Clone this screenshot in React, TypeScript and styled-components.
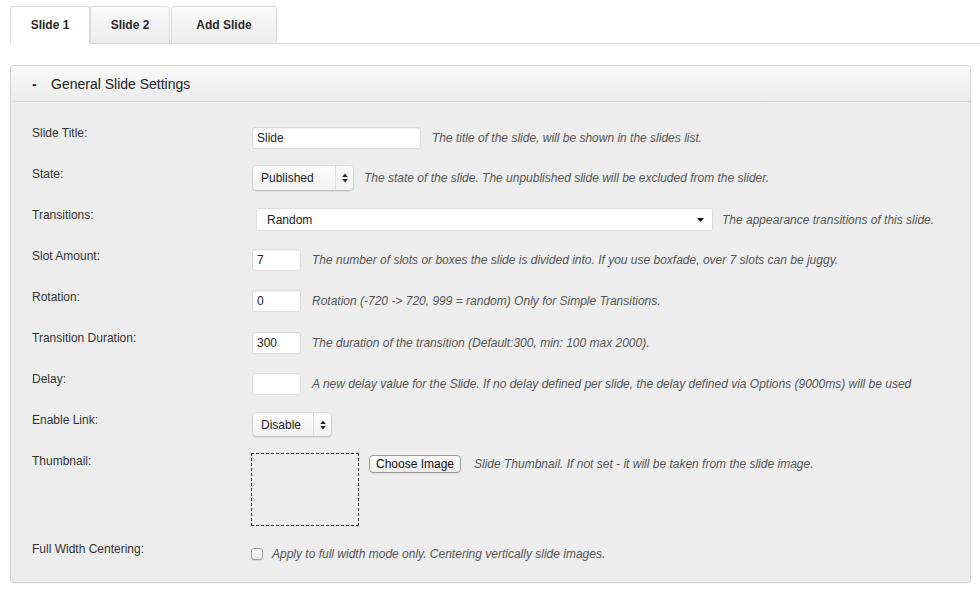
import React from "react";
import styled, { createGlobalStyle } from "styled-components";

const GlobalStyle = createGlobalStyle`
  html, body { margin: 0; padding: 0; background: #fff; }
  body { font-family: "Liberation Sans", Arial, Helvetica, sans-serif; color: #333; }
  * { box-sizing: border-box; }
`;

const Page = styled.div`
  width: 980px;
  height: 592px;
  padding: 6px 9px 0 10px;
  overflow: hidden;
`;

const TabBar = styled.div`
  display: flex;
  align-items: flex-end;
  height: 38px;
  margin-right: -9px;
  border-bottom: 1px solid #dadada;
`;

const Tab = styled.div<{ $active?: boolean; $w: number; $gap: number }>`
  width: ${(p) => p.$w}px;
  margin-right: ${(p) => p.$gap}px;
  height: 38px;
  margin-bottom: -1px;
  display: flex;
  align-items: center;
  justify-content: center;
  font-size: 12px;
  font-weight: bold;
  color: #2a2a2a;
  border: 1px solid #dadada;
  border-radius: 3px 3px 0 0;
  background: ${(p) => (p.$active ? "#fff" : "linear-gradient(#fafafa, #ececec)")};
  border-bottom-color: ${(p) => (p.$active ? "#fff" : "#dadada")};
`;

const Panel = styled.div`
  margin-top: 21px;
  height: 518px;
  border: 1px solid #d6d6d6;
  border-radius: 3px;
  background: #ededed;
  box-shadow: 0 1px 1px rgba(0, 0, 0, 0.04);
  overflow: hidden;
`;

const PanelHeader = styled.div`
  height: 36px;
  display: flex;
  align-items: center;
  padding-left: 21px;
  font-size: 14px;
  color: #222;
  background: linear-gradient(#fafafa, #ebebeb);
  border-bottom: 1px solid #d6d6d6;
`;

const Dash = styled.span`
  width: 19px;
  font-weight: bold;
`;

const PanelBody = styled.div`
  padding-top: 22px;
`;

const Row = styled.div<{ $h?: number }>`
  display: flex;
  align-items: flex-start;
  height: ${(p) => p.$h ?? 41}px;
`;

const Label = styled.div`
  width: 241px;
  flex: none;
  padding: 1px 0 0 21px;
  font-size: 12px;
  line-height: 16px;
  color: #333;
`;

const Field = styled.div<{ $top: number; $align?: string }>`
  display: flex;
  align-items: ${(p) => p.$align ?? "center"};
  padding-top: ${(p) => p.$top}px;
  white-space: nowrap;
`;

const Desc = styled.span<{ $gap: number }>`
  margin-left: ${(p) => p.$gap}px;
  font-size: 12px;
  font-style: italic;
  color: #555;
  line-height: 16px;
`;

const TextInput = styled.input<{ $w: number }>`
  width: ${(p) => p.$w}px;
  height: 22px;
  padding: 0 4px;
  font-family: "Liberation Sans", Arial, sans-serif;
  font-size: 12px;
  color: #222;
  background: #fff;
  border: 1px solid #dcdcdc;
  border-radius: 3px;
  box-shadow: inset 0 1px 1px rgba(0, 0, 0, 0.05);
  outline: none;
`;

const MacSelect = styled.div<{ $w: number; $h: number }>`
  width: ${(p) => p.$w}px;
  height: ${(p) => p.$h}px;
  margin-left: 1px;
  display: flex;
  align-items: stretch;
  border-radius: 4px;
  background: linear-gradient(#fdfdfd, #f1f1f1);
  box-shadow: 0 0 0 1px rgba(0, 0, 0, 0.05), 0 1px 2px rgba(0, 0, 0, 0.2);
  font-size: 12px;
  color: #1c1c1c;
`;

const MacSelectText = styled.div`
  flex: 1;
  display: flex;
  align-items: center;
  padding-left: 8px;
`;

const MacSelectArrows = styled.div`
  width: 18px;
  display: flex;
  align-items: center;
  justify-content: center;
  border-left: 1px solid #e0e0e0;
`;

const WideSelect = styled.div`
  width: 457px;
  height: 23px;
  margin-left: 4px;
  display: flex;
  align-items: center;
  justify-content: space-between;
  padding: 0 8px 0 10px;
  background: #fff;
  border: 1px solid #dedede;
  border-radius: 2px;
  font-size: 12px;
  color: #222;
`;

const ThumbBox = styled.div`
  width: 108px;
  height: 73px;
  margin-left: -1px;
  border: 1px dashed #222;
`;

const ThumbSide = styled.div`
  display: flex;
  align-items: center;
  margin-top: 2px;
  margin-left: 10px;
`;

const Button = styled.div`
  width: 92px;
  height: 18px;
  display: flex;
  align-items: center;
  justify-content: center;
  font-size: 12px;
  color: #111;
  border: 1px solid #9a9a9a;
  border-radius: 4px;
  background: linear-gradient(#ffffff, #ececec);
  box-shadow: 0 1px 0 rgba(0, 0, 0, 0.05);
`;

const Checkbox = styled.span`
  width: 12px;
  height: 12px;
  margin-left: -1px;
  border: 1px solid #9c9c9c;
  border-radius: 3px;
  background: linear-gradient(#ffffff, #e8e8e8);
  box-shadow: 0 1px 1px rgba(0, 0, 0, 0.08);
`;

const UpDown = () => (
  <svg width="6" height="10" viewBox="0 0 6 10">
    <path d="M3 0.5 L5.8 4 H0.2 Z" fill="#222" />
    <path d="M3 9.5 L5.8 6 H0.2 Z" fill="#222" />
  </svg>
);

const Down = () => (
  <svg width="7" height="4" viewBox="0 0 7 4">
    <path d="M0 0 H7 L3.5 4 Z" fill="#111" />
  </svg>
);

export default function App() {
  return (
    <>
      <GlobalStyle />
      <Page>
        <TabBar>
          <Tab $active $w={80} $gap={0}>Slide 1</Tab>
          <Tab $w={80} $gap={1}>Slide 2</Tab>
          <Tab $w={106} $gap={0}>Add Slide</Tab>
        </TabBar>
        <Panel>
          <PanelHeader>
            <Dash>-</Dash>
            General Slide Settings
          </PanelHeader>
          <PanelBody>
            <Row>
              <Label>Slide Title:</Label>
              <Field $top={3}>
                <TextInput $w={169} defaultValue="Slide" readOnly />
                <Desc $gap={11}>The title of the slide, will be shown in the slides list.</Desc>
              </Field>
            </Row>
            <Row>
              <Label>State:</Label>
              <Field $top={1}>
                <MacSelect $w={100} $h={24}>
                  <MacSelectText>Published</MacSelectText>
                  <MacSelectArrows><UpDown /></MacSelectArrows>
                </MacSelect>
                <Desc $gap={11}>The state of the slide. The unpublished slide will be excluded from the slider.</Desc>
              </Field>
            </Row>
            <Row>
              <Label>Transitions:</Label>
              <Field $top={2}>
                <WideSelect>
                  <span>Random</span>
                  <Down />
                </WideSelect>
                <Desc $gap={9}>The appearance transitions of this slide.</Desc>
              </Field>
            </Row>
            <Row>
              <Label>Slot Amount:</Label>
              <Field $top={2}>
                <TextInput $w={49} defaultValue="7" readOnly />
                <Desc $gap={11}>The number of slots or boxes the slide is divided into. If you use boxfade, over 7 slots can be juggy.</Desc>
              </Field>
            </Row>
            <Row>
              <Label>Rotation:</Label>
              <Field $top={2}>
                <TextInput $w={49} defaultValue="0" readOnly />
                <Desc $gap={11}>Rotation (-720 -&gt; 720, 999 = random) Only for Simple Transitions.</Desc>
              </Field>
            </Row>
            <Row>
              <Label>Transition Duration:</Label>
              <Field $top={3}>
                <TextInput $w={49} defaultValue="300" readOnly />
                <Desc $gap={11}>The duration of the transition (Default:300, min: 100 max 2000).</Desc>
              </Field>
            </Row>
            <Row>
              <Label>Delay:</Label>
              <Field $top={3}>
                <TextInput $w={49} defaultValue="" readOnly />
                <Desc $gap={11}>A new delay value for the Slide. If no delay defined per slide, the delay defined via Options (9000ms) will be used</Desc>
              </Field>
            </Row>
            <Row>
              <Label>Enable Link:</Label>
              <Field $top={2}>
                <MacSelect $w={78} $h={23}>
                  <MacSelectText>Disable</MacSelectText>
                  <MacSelectArrows><UpDown /></MacSelectArrows>
                </MacSelect>
              </Field>
            </Row>
            <Row $h={88}>
              <Label>Thumbnail:</Label>
              <Field $top={1} $align="flex-start">
                <ThumbBox />
                <ThumbSide>
                  <Button>Choose Image</Button>
                  <Desc $gap={13}>Slide Thumbnail. If not set - it will be taken from the slide image.</Desc>
                </ThumbSide>
              </Field>
            </Row>
            <Row>
              <Label>Full Width Centering:</Label>
              <Field $top={6}>
                <Checkbox />
                <Desc $gap={9}>Apply to full width mode only. Centering vertically slide images.</Desc>
              </Field>
            </Row>
          </PanelBody>
        </Panel>
      </Page>
    </>
  );
}
